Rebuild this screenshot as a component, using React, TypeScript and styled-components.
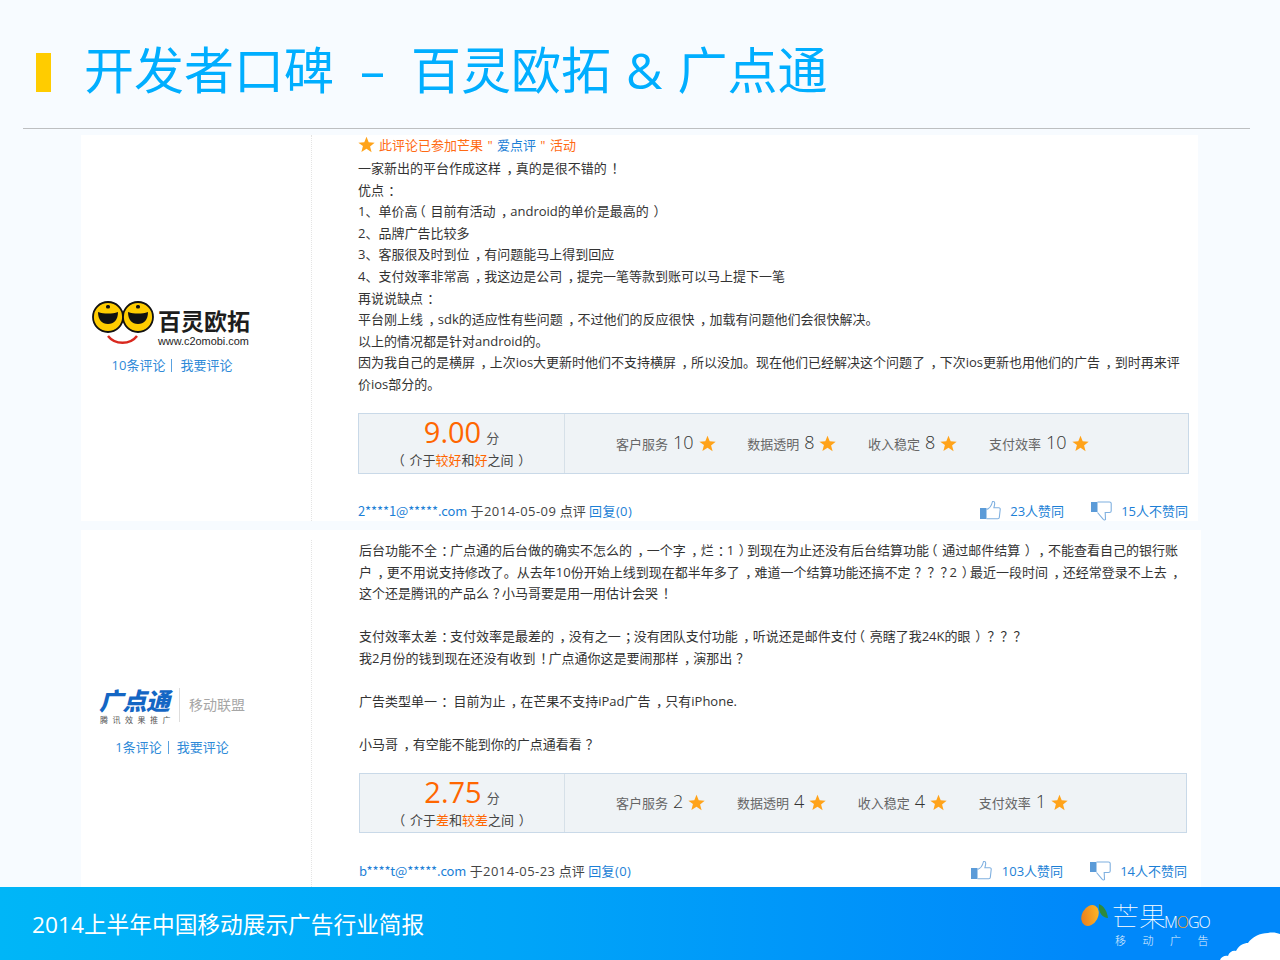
import React from "react";
import styled, { createGlobalStyle } from "styled-components";

const Global = createGlobalStyle`
  html, body { margin: 0; padding: 0; background: #f7fbff; }
  body { font-family: "Open Sans", "Noto Sans CJK SC", "Liberation Sans", sans-serif; text-spacing-trim: space-all; }
`;

const Page = styled.div`
  width: 1280px; height: 960px; display: flex; flex-direction: column; overflow: hidden; background: #f7fbff;
`;
const Header = styled.header`
  height: 75px; margin: 0 30px 0 23px; padding: 53px 0 0 13px;
  border-bottom: 1px solid #bdbfc1; display: flex; align-items: flex-start; flex: none;
`;
const Bar = styled.div`width: 15px; height: 39px; background: #ffcc00; flex: none;`;
const Title = styled.h1`
  margin: -18px 0 0 33px; font-size: 50px; line-height: 70px; font-weight: 400; color: #00aeff; white-space: pre;
`;
const Amp = styled.span`margin: 0 2px;`;
const Main = styled.main`
  flex: 1; min-height: 0; padding: 6px 0 0 81px; display: flex; flex-direction: column; gap: 9px;
`;
const Card = styled.section<{ $w: number; $h?: number }>`
  width: ${p => p.$w}px; ${p => (p.$h ? `height: ${p.$h}px;` : "min-height: 0;")}
  background: #fff; display: flex; flex: ${p => (p.$h ? "none" : 1)};
`;
const Side = styled.div<{ $top: number; $h?: number }>`
  width: 231px; flex: none; box-sizing: border-box; border-right: 1px dotted #e4e4e4; padding: ${p => p.$top}px 48px 0 0;
  display: flex; flex-direction: column; align-items: center; ${p => (p.$h ? `height: ${p.$h}px; margin-top: 10px;` : "")}
`;
const Body = styled.div<{ $left: number; $top: number }>`
  padding: ${p => p.$top}px 0 0 ${p => p.$left}px; flex: 1; min-width: 0;
`;
const Promo = styled.div`
  height: 19px; margin-bottom: 4px; display: flex; align-items: center; gap: 4px; font-size: 13px; color: #ff6a13; white-space: pre; word-spacing: 1px;
`;
const PromoLink = styled.span`color: #1c7fd6;`;
const Line = styled.div`
  height: 21.6px; line-height: 21.6px; font-size: 13px; color: #333; white-space: pre;
`;
/* full-width punctuation sits centred in its cell, as in the reference's font */
const Punct = styled.span<{ $pad: number; $tail: number }>`
  padding-left: ${p => p.$pad}px; letter-spacing: ${p => p.$tail}px;
`;
const OpenParen = styled.span`margin: 0 4.7px 0 -4.7px;`;
const Stats = styled.div<{ $w: number; $h: number; $mt: number }>`
  width: ${p => p.$w}px; height: ${p => p.$h}px; box-sizing: border-box; margin-top: ${p => p.$mt}px;
  background: #eff3f6; border: 1px solid #c9d9e8; display: flex;
`;
const ScoreCell = styled.div<{ $w: number }>`
  width: ${p => p.$w}px; box-sizing: border-box; flex: none; border-right: 1px solid #d6e0e8; display: flex; flex-direction: column; align-items: center;
`;
const ScoreRow = styled.div`display: flex; align-items: baseline; height: 36px; line-height: 36px; gap: 5px; color: #555; font-size: 13px;`;
const ScoreNum = styled.span`font-size: 29px; font-weight: 400; color: #ff6600;`;
const ScoreNote = styled.div`font-size: 13px; line-height: 20px; color: #444; white-space: pre;`;
const Hot = styled.span`color: #ff6600;`;
const Items = styled.div`display: flex; align-items: center; gap: 31.6px; padding-left: 51px;`;
const Item = styled.div`display: flex; align-items: center; font-size: 13px; color: #666; white-space: pre;`;
const ItemNum = styled.span`font-size: 18px; font-weight: 300; color: #333; margin: -3px 5px 0 5px;`;
const Meta = styled.div<{ $w: number; $mt: number }>`
  width: ${p => p.$w}px; height: 20px; margin-top: ${p => p.$mt}px; display: flex; align-items: center; justify-content: space-between;
  font-size: 13px; line-height: 20px; white-space: pre; color: #444;
`;
const Blue = styled.span`color: #1c7fd6;`;
const Email = styled(Blue)`font-family: "Noto Sans CJK SC", sans-serif; letter-spacing: -.12px;`;
const DateText = styled.span`letter-spacing: .45px;`;
const Reply = styled(Blue)`letter-spacing: .4px;`;
const Votes = styled.div`display: flex; align-items: center;`;
const Vote = styled.div<{ $gap?: number }>`display: flex; align-items: center; color: #1c7fd6; margin-left: ${p => p.$gap ?? 0}px;`;
const VoteIcon = styled.svg`width: 21px; height: 20px; margin-right: 9.5px; flex: none;`;
const Links = styled.div`display: flex; align-items: center; font-size: 13px; line-height: 20px; color: #2e8ad8; white-space: pre;`;
const Sep = styled.span`margin: 0 8px 0 6px; width: 1px; height: 13px; background: #5aa2e0;`;

const LogoA = styled.div`display: flex; align-items: flex-start; width: 160px; height: 54px;`;
const FaceSvg = styled.svg`width: 62px; height: 45px; flex: none;`;
const LogoAText = styled.div`display: flex; flex-direction: column; margin: 7px 0 0 4px; color: #1d1d1d;`;
const LogoAName = styled.span`font-size: 23px; line-height: 25px; font-weight: 700; white-space: nowrap; font-family: "Noto Sans CJK SC", sans-serif;`;
const LogoAUrl = styled.span`font-family: "Liberation Sans", sans-serif; font-size: 10.9px; line-height: 15px; margin-top: 1px; white-space: nowrap;`;

const LogoB = styled.div`display: flex; align-items: flex-start; height: 49px;`;
const LogoBLeft = styled.div`display: flex; flex-direction: column; width: 71px; padding-right: 9px;`;
const LogoBName = styled.span`
  font-size: 24px; line-height: 24px; font-weight: 900; color: #1466c4; font-style: italic; white-space: nowrap; letter-spacing: -.5px; font-family: "Noto Sans CJK SC", sans-serif;
`;
const LogoBSub = styled.span`font-size: 8px; line-height: 9px; color: #555; letter-spacing: 4.5px; white-space: nowrap; margin: 3px 0 0 1px;`;
const LogoBAlly = styled.span`
  border-left: 1px solid #ddd; padding-left: 9px; font-size: 14px; line-height: 34px; color: #a6a6a6; white-space: nowrap;
`;

const Footer = styled.footer`
  height: 73px; flex: none; position: relative; display: flex; align-items: center; justify-content: space-between;
  background: linear-gradient(90deg, #00b6f7 0%, #00a5f8 40%, #0088fa 85%, #0088fa 100%);
  padding: 0 69px 0 32px; box-sizing: border-box;
`;
const FooterText = styled.div`font-size: 22.7px; color: #fff; font-weight: 400; white-space: nowrap;`;
const Brand = styled.div`display: flex; align-items: flex-start; height: 56px; margin-top: 8px;`;
const Mango = styled.svg`width: 28px; height: 24px; flex: none; margin: 3px 4px 0 0;`;
const BrandText = styled.div`display: flex; flex-direction: column; color: #fff; width: 99px;`;
const BrandTop = styled.div`display: flex; align-items: flex-end; height: 32px;`;
const BrandCn = styled.span`font-size: 27px; line-height: 32px; font-weight: 100; white-space: nowrap; font-family: "Noto Sans CJK SC", sans-serif;`;
const BrandEn = styled.span`font-size: 16px; line-height: 20px; font-weight: 300; letter-spacing: -1px; margin-left: -2px; white-space: nowrap;`;
const BrandO = styled.span`color: #f7a11a;`;
const BrandSub = styled.span`font-size: 11px; line-height: 16px; letter-spacing: 16.5px; padding-left: 3px; margin-top: 1px; white-space: nowrap; opacity: .9; font-weight: 300;`;
const Cloud = styled.svg`position: absolute; right: 0; bottom: 0; width: 60px; height: 28px;`;

const StarSvg = styled.svg<{ $s: number }>`width: ${p => p.$s}px; height: ${p => p.$s}px; flex: none;`;
const Star = ({ s = 17 }: { s?: number }) => (
  <StarSvg $s={s} viewBox="0 0 20 20"><path fill="#ffa31a" d="M10 .8l2.6 6.5 7 .5-5.4 4.5 1.8 6.9L10 14.9l-6 3.8 1.8-6.9L.4 7.8l7-.5z" /></StarSvg>
);
const ThumbUp = () => (
  <VoteIcon viewBox="0 0 21 20">
    <rect x="0" y="7" width="6.5" height="11" fill="#5b9bd8" />
    <path fill="none" stroke="#7fb0e0" strokeWidth="1.1" d="M6.5 8.500c2.500-.8 5-3.400 6-8 1.200-.6 2.200.4 2.200 2 0 1.500-.6 2.800-.8 4.200h4.900c1 0 1.500.8 1.400 1.800l-.9 8c-.1.800-.7 1.300-1.500 1.300H6.500" />
  </VoteIcon>
);
const ThumbDown = () => (
  <VoteIcon viewBox="0 0 21 20">
    <rect x="0" y="1" width="6.5" height="10" fill="#5b9bd8" />
    <path fill="none" stroke="#7fb0e0" strokeWidth="1.1" d="M6.500 1h12c1 0 1.700.6 1.700 1.500v7.500c0 .9-.7 1.500-1.700 1.500h-4.300l.3 7c-.6.700-1.500.500-2.200-.200l-5.800-6.800" />
  </VoteIcon>
);

const PAD: Record<string, [number, number]> = {
  "，": [5.46, -3.66], "！": [4.7, -4.7], "：": [4.2, -4.2], "；": [4.2, -4.2], "？": [3.9, -3.9], "）": [4.7, -4.7],
};
const fmt = (text: string) =>
  text.split(/([，！：；？（）])/).map((part, i) => {
    if (part === "（") return <OpenParen key={i}>{part}</OpenParen>;
    const pad = PAD[part];
    return pad ? <Punct key={i} $pad={pad[0]} $tail={pad[1]}>{part}</Punct> : part;
  });

type Score = { label: string; value: string };
const StatsBox = ({ w, h, mt, cell, score, note, items }: { w: number; h: number; mt: number; cell: number; score: string; note: React.ReactNode; items: Score[] }) => (
  <Stats $w={w} $h={h} $mt={mt}>
    <ScoreCell $w={cell}>
      <ScoreRow><ScoreNum>{score}</ScoreNum>分</ScoreRow>
      <ScoreNote>{note}</ScoreNote>
    </ScoreCell>
    <Items>
      {items.map(i => (
        <Item key={i.label}>{i.label}<ItemNum>{i.value}</ItemNum><Star /></Item>
      ))}
    </Items>
  </Stats>
);

const textA = [
  "一家新出的平台作成这样，真的是很不错的！",
  "优点：",
  "1、单价高（目前有活动，android的单价是最高的）",
  "2、品牌广告比较多",
  "3、客服很及时到位，有问题能马上得到回应",
  "4、支付效率非常高，我这边是公司，提完一笔等款到账可以马上提下一笔",
  "再说说缺点：",
  "平台刚上线，sdk的适应性有些问题，不过他们的反应很快，加载有问题他们会很快解决。",
  "以上的情况都是针对android的。",
  "因为我自己的是横屏，上次ios大更新时他们不支持横屏，所以没加。现在他们已经解决这个问题了，下次ios更新也用他们的广告，到时再来评",
  "价ios部分的。",
];
const textB = [
  "后台功能不全：广点通的后台做的确实不怎么的，一个字，烂：1）到现在为止还没有后台结算功能（通过邮件结算），不能查看自己的银行账",
  "户，更不用说支持修改了。从去年10份开始上线到现在都半年多了，难道一个结算功能还搞不定？？？2）最近一段时间，还经常登录不上去，",
  "这个还是腾讯的产品么？小马哥要是用一用估计会哭！",
  " ",
  "支付效率太差：支付效率是最差的，没有之一；没有团队支付功能，听说还是邮件支付（亮瞎了我24K的眼）？？？",
  "我2月份的钱到现在还没有收到！广点通你这是要闹那样，演那出？",
  " ",
  "广告类型单一： 目前为止，在芒果不支持iPad广告，只有iPhone.",
  " ",
  "小马哥，有空能不能到你的广点通看看？",
];

export default function App() {
  return (
    <Page>
      <Global />
      <Header>
        <Bar />
        <Title>开发者口碑  –  百灵欧拓 <Amp>&amp;</Amp> 广点通</Title>
      </Header>
      <Main>
        <Card $w={1117} $h={386}>
          <Side $top={166}>
            <LogoA>
              <FaceSvg viewBox="0 0 62 45">
                <circle cx="16" cy="16" r="15" fill="#ffcc00" stroke="#111" strokeWidth="1.800" />
                <circle cx="46" cy="16" r="15" fill="#ffcc00" stroke="#111" strokeWidth="1.800" />
                <path d="M6 11c6 2 14 2 20 0 0 8-4 12-10 12S6 19 6 11zM36 11c6 2 14 2 20 0 0 8-4 12-10 12s-10-4-10-12z" fill="#111" />
                <rect x="14" y="4" width="4" height="3.500" rx="1.500" fill="#111" />
                <rect x="44" y="4" width="4" height="3.500" rx="1.500" fill="#111" />
                <path d="M16 35c7 9 22 9 29 0" fill="none" stroke="#d9281e" strokeWidth="2.500" />
              </FaceSvg>
              <LogoAText>
                <LogoAName>百灵欧拓</LogoAName>
                <LogoAUrl>www.c2omobi.com</LogoAUrl>
              </LogoAText>
            </LogoA>
            <Links>10条评论<Sep />我要评论</Links>
          </Side>
          <Body $left={46} $top={0}>
            <Promo><Star s={17} /> <span>此评论已参加芒果 " <PromoLink>爱点评</PromoLink> " 活动</span></Promo>
            {textA.map(t => <Line key={t}>{fmt(t)}</Line>)}
            <StatsBox
              w={831} h={61} mt={17} cell={206} score="9.00"
              note={<>{fmt("（")}介于<Hot>较好</Hot>和<Hot>好</Hot>之间{fmt("）")}</>}
              items={[
                { label: "客户服务", value: "10" }, { label: "数据透明", value: "8" },
                { label: "收入稳定", value: "8" }, { label: "支付效率", value: "10" },
              ]}
            />
            <Meta $w={830} $mt={27}>
              <span><Email>2****1@*****.com</Email> <DateText>于2014-05-09</DateText> 点评 <Reply>回复(0)</Reply></span>
              <Votes>
                <Vote><ThumbUp />23人赞同</Vote>
                <Vote $gap={26.5}><ThumbDown />15人不赞同</Vote>
              </Votes>
            </Meta>
          </Body>
        </Card>
        <Card $w={1120}>
          <Side $top={148} $h={347}>
            <LogoB>
              <LogoBLeft>
                <LogoBName>广点通</LogoBName>
                <LogoBSub>腾讯效果推广</LogoBSub>
              </LogoBLeft>
              <LogoBAlly>移动联盟</LogoBAlly>
            </LogoB>
            <Links>1条评论<Sep />我要评论</Links>
          </Side>
          <Body $left={47} $top={10}>
            {textB.map((t, i) => <Line key={i}>{fmt(t)}</Line>)}
            <StatsBox
              w={828} h={60} mt={17} cell={205} score="2.75"
              note={<>{fmt("（")}介于<Hot>差</Hot>和<Hot>较差</Hot>之间{fmt("）")}</>}
              items={[
                { label: "客户服务", value: "2" }, { label: "数据透明", value: "4" },
                { label: "收入稳定", value: "4" }, { label: "支付效率", value: "1" },
              ]}
            />
            <Meta $w={828} $mt={28}>
              <span><Email>b****t@*****.com</Email> <DateText>于2014-05-23</DateText> 点评 <Reply>回复(0)</Reply></span>
              <Votes>
                <Vote><ThumbUp />103人赞同</Vote>
                <Vote $gap={26.5}><ThumbDown />14人不赞同</Vote>
              </Votes>
            </Meta>
          </Body>
        </Card>
      </Main>
      <Footer>
        <FooterText>2014上半年中国移动展示广告行业简报</FooterText>
        <Brand>
          <Mango viewBox="0 0 28 24">
            <defs>
              <linearGradient id="mg" x1="0" y1="1" x2="1" y2="0">
                <stop offset="0" stopColor="#e8741a" /><stop offset="1" stopColor="#ffc02a" />
              </linearGradient>
            </defs>
            <ellipse cx="10" cy="12.500" rx="8" ry="11" fill="url(#mg)" transform="rotate(28 10 12.500)" />
            <path d="M19 1c5 2 8 7 9 14-5 0-10-5-9-14z" fill="#2e8a3c" />
          </Mango>
          <BrandText>
            <BrandTop><BrandCn>芒果</BrandCn><BrandEn>M<BrandO>O</BrandO>GO</BrandEn></BrandTop>
            <BrandSub>移动广告</BrandSub>
          </BrandText>
        </Brand>
        <Cloud viewBox="0 0 60 28">
          <path fill="#fff" d="M0 28c1-3 5-5 8-4 1-4 5-6 8-5 3-6 8-8 12-8 4-6 12-10 20-10 5-1 9 0 12 1v26z" />
        </Cloud>
      </Footer>
    </Page>
  );
}
